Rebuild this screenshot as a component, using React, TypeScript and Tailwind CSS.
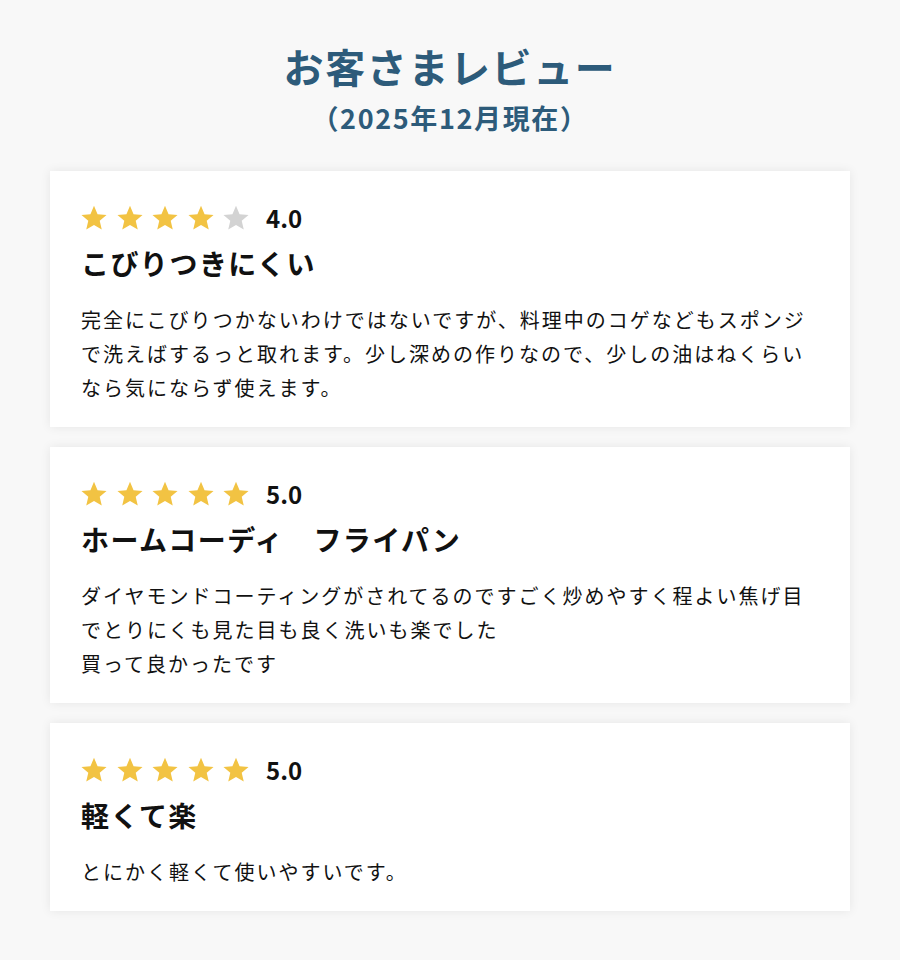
const reviews = [
  {
    rating: 4,
    title: 'こびりつきにくい',
    body: '完全にこびりつかないわけではないですが、料理中のコゲなどもスポンジで洗えばするっと取れます。少し深めの作りなので、少しの油はねくらいなら気にならず使えます。',
  },
  {
    rating: 5,
    title: 'ホームコーディ　フライパン',
    body: 'ダイヤモンドコーティングがされてるのですごく炒めやすく程よい焦げ目でとりにくも見た目も良く洗いも楽でした\n買って良かったです',
  },
  {
    rating: 5,
    title: '軽くて楽',
    body: 'とにかく軽くて使いやすいです。',
  },
];

function Star({ filled }: { filled: boolean }) {
  return (
    <svg width="28" height="28" viewBox="0 0 24 24" className={filled ? 'text-[#f2c343]' : 'text-[#d3d3d3]'}>
      <path
        fill="currentColor"
        d="M12 1.6l3.05 7.1 7.7.65-5.85 5.05 1.75 7.55L12 17.95l-6.65 4 1.75-7.55L1.25 9.35l7.7-.65z"
      />
    </svg>
  );
}

function ReviewCard({ rating, title, body }: { rating: number, title: string, body: string }) {
  return (
    <div className="bg-white shadow-[0_0_10px_rgba(0,0,0,0.08)] px-[31px] pt-[32px] pb-[22px]">
      <div className="flex flex-row items-center h-[30px]">
        <div className="flex flex-row gap-[7.5px] -ml-[1px]">
          {[1, 2, 3, 4, 5].map((i) => (
            <Star key={i} filled={i <= rating} />
          ))}
        </div>
        <p className="ml-[16px] text-[24px] font-bold text-[#111]">{rating.toFixed(1)}</p>
      </div>
      <h2 className="mt-[10px] text-[28px] leading-[40px] font-bold tracking-[0.05em] text-[#111]">{title}</h2>
      <p className="mt-[20px] text-[20px] leading-[34px] tracking-[0.1em] text-[#111] whitespace-pre-line">{body}</p>
    </div>
  );
}

export default function App() {
  return (
    <div
      className="min-h-[960px] bg-[#f8f8f8] px-[50px] pt-[38px] pb-[44px]"
      style={{ fontFamily: '"Noto Sans CJK JP", "Noto Sans", sans-serif' }}
    >
      <h1 className="text-center text-[40px] leading-[56px] font-bold tracking-[0.04em] text-[#2d5b7a]">お客さまレビュー</h1>
      <p className="mt-[6px] text-center text-[27px] leading-[36px] font-bold tracking-[0.06em] text-[#2d5b7a]">（2025年12月現在）</p>
      <div className="mt-[35px] flex flex-col gap-[20px]">
        {reviews.map((r) => (
          <ReviewCard key={r.title} rating={r.rating} title={r.title} body={r.body} />
        ))}
      </div>
    </div>
  );
}
